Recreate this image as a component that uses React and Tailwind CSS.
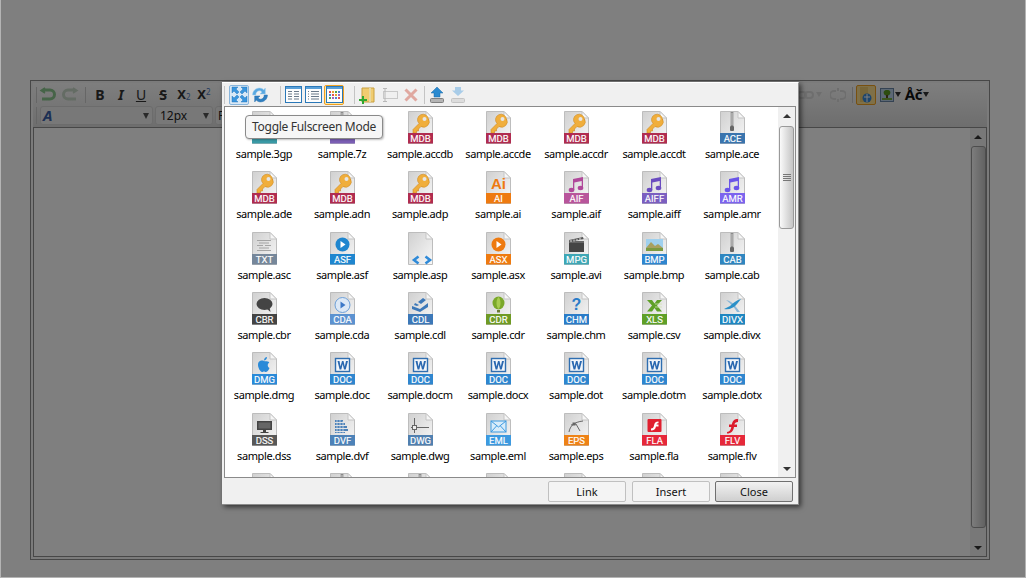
import React from "react";

const files = [
  ["3gp","","#3a9aa6","film"],["7z","","#7b5fb5","zip"],["accdb","MDB","#b02c50","key"],["accde","MDB","#b02c50","key"],["accdr","MDB","#b02c50","key"],["accdt","MDB","#b02c50","key"],["ace","ACE","#3a74ad","zip"],
  ["ade","MDB","#b02c50","key"],["adn","MDB","#b02c50","key"],["adp","MDB","#b02c50","key"],["ai","AI","#ee7a10","ai"],["aif","AIF","#b8559b","noteP"],["aiff","AIFF","#7b5fc0","noteV"],["amr","AMR","#7c64ee","noteB"],
  ["asc","TXT","#76879a","txt"],["asf","ASF","#1f86cf","playB"],["asp","","","code"],["asx","ASX","#ee7a10","playO"],["avi","MPG","#3fa7b5","clap"],["bmp","BMP","#2f86cf","land"],["cab","CAB","#2f86c0","zip"],
  ["cbr","CBR","#444444","bubble"],["cda","CDA","#5c92d0","disc"],["cdl","CDL","#3c78b8","cdl"],["cdr","CDR","#6f9a24","balloon"],["chm","CHM","#2a7cc8","help"],["csv","XLS","#5fa028","xls"],["divx","DIVX","#1f86c0","divx"],
  ["dmg","DMG","#2a8ad8","apple"],["doc","DOC","#2f86cf","word"],["docm","DOC","#2f86cf","word"],["docx","DOC","#2f86cf","word"],["dot","DOC","#2f86cf","word"],["dotm","DOC","#2f86cf","word"],["dotx","DOC","#2f86cf","word"],
  ["dss","DSS","#585858","monitor"],["dvf","DVF","#4d82b8","grid"],["dwg","DWG","#5080b0","dwg"],["eml","EML","#3d9ae0","mail"],["eps","EPS","#ee8216","eps"],["fla","FLA","#e6283a","fla"],["flv","FLV","#e6283a","flv"],
  ["","","",""],["","","","zip"],["","","","zip"],["","","",""],["","","",""],["","","",""],["","","",""],
];

function Glyph({ type }) {
  switch (type) {
    case "key":
      return <g><path d="M22.500 8.500 a5.500 5.500 0 1 0 -9.500 4 L7 18.500 l0 3.500 3.500 0 0-2 2 0 0-2 2.500 -2.500 a5.500 5.500 0 0 0 7.500-7.500z" fill="#f0ae3c" stroke="#cf8a20" strokeWidth=".6"/><circle cx="18.500" cy="8" r="2" fill="#e6e6e6"/></g>;
    case "zip":
      return <g><rect x="12.600" y="1" width="2.800" height="14" fill="#8a8a8a"/><path d="M12.600 3h2.800M12.600 5h2.800M12.600 7h2.800M12.600 9h2.800M12.600 11h2.800M12.600 13h2.800" stroke="#d8d8d8" strokeWidth=".8"/><rect x="12" y="15" width="4" height="5" rx="1" fill="#666"/></g>;
    case "film":
      return <g><rect x="7" y="6" width="14" height="12" fill="#57686c"/><path d="M9 8h2M9 11h2M9 14h2M17 8h2M17 11h2M17 14h2" stroke="#eee" strokeWidth="1.200"/></g>;
    case "ai":
      return <text x="14.500" y="18" textAnchor="middle" fontFamily="'Liberation Sans', sans-serif" fontWeight="700" fontSize="15" fill="#ee7a10">Ai</text>;
    case "noteP": case "noteV": case "noteB": {
      const c = type === "noteP" ? "#b0489a" : type === "noteV" ? "#6a4cc0" : "#6a55e8";
      return <g fill={c}><ellipse cx="9.500" cy="19" rx="2.800" ry="2.200"/><ellipse cx="18.500" cy="17" rx="2.800" ry="2.200"/><path d="M11 19V8l10-2v11h-1.300V10l-7.400 1.500V19z"/></g>;
    }
    case "txt":
      return <g stroke="#a4a4a4" strokeWidth="1"><path d="M7 8.500h14M9 11h10M7 13.500h6M15 13.500h6M9 16h10M7 18.500h14"/></g>;
    case "playB": case "playO": {
      const c = type === "playB" ? "#1f86cf" : "#ee7a10";
      return <g><circle cx="14.500" cy="12.500" r="7" fill={c}/><path d="M12.500 9v7l5-3.500z" fill="#fff"/></g>;
    }
    case "code":
      return <g fill="none" stroke="#2f8ad8" strokeWidth="2.600"><path d="M12.500 24.500L8 28l4.500 3.500"/><path d="M19.500 24.500L24 28l-4.500 3.500"/></g>;
    case "clap":
      return <g><rect x="7" y="11" width="15" height="9" fill="#444"/><path d="M7 9h15v2H7z" fill="#666"/><path d="M7 8l14-3 .6 2L7.600 10z" fill="#555"/><path d="M9 8v2M12 7.500v2M15 7v2M18 6v2" stroke="#ddd" strokeWidth="1"/></g>;
    case "land":
      return <g><rect x="6" y="7" width="17" height="12" fill="#9fd0ee"/><path d="M6 16l5-6 4 4 3-2 5 4v3H6z" fill="#a8a060"/><rect x="6" y="16" width="17" height="3" fill="#7a9a40"/></g>;
    case "bubble":
      return <g fill="#444"><ellipse cx="14.500" cy="12" rx="8" ry="6"/><path d="M16 16l4.500 4-1-5z"/></g>;
    case "disc":
      return <g><circle cx="14.500" cy="13" r="7.500" fill="#dce8f6" stroke="#6ea0d8"/><path d="M12.500 9.500v7l5-3.500z" fill="#3c78c8"/></g>;
    case "cdl":
      return <g fill="#3c78b8"><path d="M6 14l8 3 8-6v4l-8 5-8-3z"/><path d="M17 6l-5 4 3 2 5-4z"/><path d="M9 11l4 2-2 1-3-1z"/></g>;
    case "balloon":
      return <g><ellipse cx="14.500" cy="11" rx="6" ry="6.500" fill="#7aa82a"/><path d="M12.500 11c0-3 1-5 2-6 1 1 2 3 2 6s-1 5-2 6c-1-1-2-3-2-6z" fill="#a8cc50"/><rect x="13" y="18" width="3" height="2.500" fill="#6a7a30"/></g>;
    case "help":
      return <text x="14.500" y="17.500" textAnchor="middle" fontFamily="'Liberation Sans', sans-serif" fontWeight="700" fontSize="16" fill="#2a7cc8">?</text>;
    case "xls":
      return <g><path d="M7 8h5l2.500 3.500L17 8h5l-5 5.500 5 6h-5l-2.500-3.500L12 19.500H7l5-6z" fill="#5fa028"/><path d="M15 12h7M15 15h7" stroke="#d0e4b0" strokeWidth=".8"/></g>;
    case "divx":
      return <g><path d="M8 8c4 .5 7 3 10 7l4 5h-3c-3-5-6-8-11-12z" fill="#8cb8d8"/><path d="M23 7c-4 1-8 4-11 7l-6 3c5 1 10-1 13-5z" fill="#2a90c8"/></g>;
    case "apple":
      return <g fill="#2a8ad8"><path d="M14 9c-2-1-6-.5-6 4 0 3 2.500 7 4 7 1 0 1.200-.5 2-.5s1 .5 2 .5c1.500 0 3-2.500 3.500-4-2-1-2.500-4-.2-5.500C18 8.500 15.500 9.500 14 9z"/><path d="M14 8.500c0-2 1.500-3.500 3-3.500 0 2-1.500 3.500-3 3.500z"/></g>;
    case "word":
      return <g><rect x="7.500" y="6.500" width="14" height="13" fill="#f2f6fa" stroke="#2f6eb0" strokeWidth="1.400"/><path d="M9.500 9h2l1 5.500L14 9h1.500l1.300 5.500L18 9h2l-2.300 8.500H16L14.700 12l-1.400 5.500h-1.700z" fill="#2a68b0"/></g>;
    case "monitor":
      return <g><rect x="7" y="8" width="15" height="9" fill="#444"/><rect x="8.500" y="9.500" width="12" height="6" fill="#666"/><rect x="13" y="17" width="3" height="2" fill="#444"/><rect x="10.500" y="19" width="8" height="1" fill="#444"/></g>;
    case "grid":
      return <g fill="#4d82b8"><path d="M7 7h8v2H7zM7 10h10v2H7zM7 13h12v2H7zM7 16h13v2H7zM7 19h10v1H7z"/><path d="M9 6v15M12 6v15M15 8v13" stroke="#dfe6ee" strokeWidth=".7"/></g>;
    case "dwg":
      return <g fill="none" stroke="#666" strokeWidth="1"><path d="M8.500 5v15M11 14.500H23M5 14.500h1"/><rect x="6.500" y="12.500" width="4" height="4" fill="#eee"/></g>;
    case "mail":
      return <g><rect x="7" y="8" width="15" height="11" fill="#d8ecfa" stroke="#3d9ae0"/><path d="M7 8l7.500 6L22 8M7 19l5.500-6M22 19l-5.500-6" fill="none" stroke="#3d9ae0"/></g>;
    case "eps":
      return <g fill="none" stroke="#666" strokeWidth="1"><path d="M7 19c1-6 5-10 14-11"/><path d="M9 12l5-1 4 7"/><rect x="11" y="10" width="2" height="2" fill="#666"/></g>;
    case "fla":
      return <g><rect x="7.500" y="6" width="14" height="13" rx="1" fill="#e02030"/><path d="M18.500 8.500c-3 0-4 1.500-4.500 4-.4 2-1 3-3 3v2c3 0 4.500-1.500 5-4h2.500v-2h-2c.3-1 1-1.200 2-1.200z" fill="#fff"/></g>;
    case "flv":
      return <path d="M20 6c-4 0-5.500 2-6.200 5.500H11v2.500h2.300c-.6 3-1.500 4.500-4.300 5v1.500c4.500 0 6.300-2.500 7-6.500h3v-2.500h-2.600c.4-1.600 1.300-2.500 3.600-2.500z" fill="#dc1c2c"/>;
    default:
      return null;
  }
}

function FileIcon({ label, color, glyph }) {
  return (
    <svg width="28" height="34" viewBox="0 0 28 34" className="block shrink-0">
      <defs>
        <linearGradient id="p" x1="0" y1="0" x2="1" y2="1">
          <stop offset="0" stopColor="#d0d0d0" />
          <stop offset="1" stopColor="#f8f8f8" />
        </linearGradient>
      </defs>
      <path d="M2.500 .5H20l6.500 6.500V32.500H2.500z" fill="url(#p)" stroke="#bdbdbd" />
      <path d="M20 .5V7h6.500z" fill="#f6f6f6" stroke="#c4c4c4" />
      <Glyph type={glyph} />
      {color ? <rect x="2" y="22" width="25" height="10.500" fill={color} /> : null}
      {label ? (
        <text x="14.500" y="30.800" textAnchor="middle" fontFamily="Roboto, sans-serif" fontSize="9.500" stroke="#fff" strokeWidth=".15" fill="#fff">{label}</text>
      ) : null}
    </svg>
  );
}

function Tb({ active, hot, children, className = "" }) {
  return (
    <div className={"flex items-center justify-center shrink-0 rounded-[2px] " + (hot ? "border border-[#f0a020] bg-[#ffe9a8] " : active ? "border border-[#8ab6dc] bg-[#d8e8f6] " : "border border-transparent ") + className}>
      {children}
    </div>
  );
}

const Sep = () => <div className="w-px h-[18px] bg-[#c4c4c4] shrink-0" />;

function ListView({ kind }) {
  return (
    <svg width="17" height="17" viewBox="0 0 17 17">
      <rect x=".5" y=".5" width="16" height="16" fill="#fdfdfd" stroke="#2a78b8" />
      <rect x="1" y="1" width="15" height="2" fill="#5aa0d8" />
      {kind === 1 && <path d="M3 5.500h4M3 8h4M3 10.500h4M3 13h4M9 5.500h5M9 8h5M9 10.500h5M9 13h5" stroke="#6a7a8a" />}
      {kind === 2 && <path d="M3 5.500h1M3 8h1M3 10.500h1M3 13h1M6 5.500h8M6 8h8M6 10.500h8M6 13h8" stroke="#6a7a8a" />}
      {kind === 3 && (
        <g>
          <path d="M3 5h2v2H3z" fill="#e05050"/><path d="M6 5h2v2H6z" fill="#e8a030"/><path d="M9 5h2v2H9z" fill="#50a050"/><path d="M12 5h2v2h-2z" fill="#5080d0"/>
          <path d="M3 8h2v2H3z" fill="#5080d0"/><path d="M6 8h2v2H6z" fill="#e05050"/><path d="M9 8h2v2H9z" fill="#e8a030"/><path d="M12 8h2v2h-2z" fill="#a060c0"/>
          <path d="M3 11h2v2H3z" fill="#50a050"/><path d="M6 11h2v2H6z" fill="#a060c0"/><path d="M9 11h2v2H9z" fill="#5080d0"/><path d="M12 11h2v2h-2z" fill="#e05050"/>
        </g>
      )}
    </svg>
  );
}

function DialogToolbar() {
  return (
    <div className="h-[23px] flex items-center bg-[#f0f0f0] pl-[2px] shrink-0">
      <div className="w-px h-[18px] bg-[#c4c4c4] mr-[4px]" />
      <Tb active className="w-[20px] h-[20px]">
        <svg width="17" height="17" viewBox="0 0 17 17" fill="#3a96de">
          <path d="M1 1h6L5 3l3 3-2 2-3-3-2 2zM16 1v6l-2-2-3 3-2-2 3-3-2-2zM1 16v-6l2 2 3-3 2 2-3 3 2 2zM16 16h-6l2-2-3-3 2-2 3 3 2-2z" stroke="#1a6ab0" strokeWidth=".4"/>
        </svg>
      </Tb>
      <div className="w-[19px] h-[20px] flex items-center justify-center ml-[1px]">
        <svg width="18" height="18" viewBox="0 0 17 17" fill="#5aa8e0">
          <path d="M1.500 8.500c0-4 3-6.500 6.500-6.500 2 0 3 .7 4 1.700L13.500 2v5.500H8.500l1.700-1.700C9.700 4.800 9 4.500 8 4.500c-2 0-3.500 1.500-3.500 4z" stroke="#9acdf0" strokeWidth=".5"/>
          <path d="M15.500 8.500c0 4-3 6.500-6.500 6.500-2 0-3-.7-4-1.700L3.500 15V9.500h5l-1.700 1.700c.5 1 1.200 1.300 2.200 1.300 2 0 3.500-1.500 3.500-4z" fill="#2f7fc0" stroke="#2a70b0" strokeWidth=".5"/>
        </svg>
      </div>
      <div className="w-[11px]" />
      <Sep />
      <div className="w-[4px]" />
      <div className="w-[17px] flex justify-center"><ListView kind={1} /></div>
      <div className="w-[3px]" />
      <div className="w-[17px] flex justify-center"><ListView kind={2} /></div>
      <div className="w-[2px]" />
      <Tb hot className="w-[20px] h-[20px]"><ListView kind={3} /></Tb>
      <div className="w-[10px]" />
      <Sep />
      <div className="w-[4px]" />
      <svg width="17" height="18" viewBox="0 0 17 18">
        <path d="M3 2h7l5 0v14H3z" fill="#f0cc70" stroke="#c8a040" />
        <path d="M11 2v14" stroke="#e8d8a0" strokeWidth="2" />
        <path d="M0 13h3v-3h2v3h3v2H5v3H3v-3H0z" fill="#30a830" />
      </svg>
      <div className="w-[5px]" />
      <svg width="17" height="17" viewBox="0 0 17 17" fill="none" stroke="#c8c8c8">
        <rect x="2.500" y="5.500" width="14" height="7" />
        <path d="M2 2.500h4M2 15.500h4M4 2.500v13" stroke="#b8b8b8" />
      </svg>
      <div className="w-[5px]" />
      <svg width="16" height="16" viewBox="0 0 16 16" stroke="#e0a8a0" strokeWidth="3">
        <path d="M2.500 2.500l11 11M13.500 2.500l-11 11" />
      </svg>
      <div className="w-[5px]" />
      <Sep />
      <div className="w-[4px]" />
      <svg width="16" height="18" viewBox="0 0 16 18">
        <path d="M8 1l6 6h-3v4H5V7H2z" fill="#2a8ad0" stroke="#1a6aa8" strokeWidth=".5" />
        <rect x="1.500" y="12.500" width="13" height="4" rx="1" fill="#b4b4b4" stroke="#808080" />
      </svg>
      <div className="w-[5px]" />
      <svg width="16" height="18" viewBox="0 0 16 18">
        <path d="M8 10L2 4.500h3V1h6v3.500h3z" fill="#a8cce8" />
        <rect x="1.500" y="12.500" width="13" height="4" rx="1" fill="#dcdcdc" stroke="#c4c4c4" />
      </svg>
    </div>
  );
}

function Arrow({ up }) {
  return <div className={"w-0 h-0 border-x-[4px] border-x-transparent " + (up ? "border-b-[4px] border-b-[#333]" : "border-t-[4px] border-t-[#333]")} />;
}

function Grip() {
  return (
    <div className="flex flex-col gap-[1px] w-[8px]">
      <div className="h-px bg-[#777]" /><div className="h-px bg-[#777]" /><div className="h-px bg-[#777]" /><div className="h-px bg-[#777]" />
    </div>
  );
}

function FileList() {
  return (
    <div className="flex min-h-0 border border-[#8a8a8a] bg-white mx-[2px] h-[372px] shrink-0">
      <div className="flex-1 overflow-hidden grid grid-cols-[repeat(7,78px)] auto-rows-[60.33px]">
        {files.map(([ext, label, color, glyph], i) => (
          <div key={i} className="flex flex-col items-center pt-[4px]">
            <FileIcon label={label} color={color} glyph={glyph} />
            {ext ? <div className="mt-[2px] leading-[14px] text-[11px] tracking-[-0.4px] text-[#000] whitespace-nowrap">sample.{ext}</div> : null}
          </div>
        ))}
      </div>
      <div className="w-[17px] bg-[#f0f0f0] flex flex-col items-center pt-[7px] pb-[6px] shrink-0">
        <Arrow up />
        <div className="w-[15px] h-[103px] mt-[8px] rounded-[3px] border border-[#9a9a9a] bg-gradient-to-r from-[#fafafa] to-[#c4c4c4] flex items-center justify-center">
          <Grip />
        </div>
        <div className="flex-1" />
        <Arrow />
      </div>
    </div>
  );
}

function DlgButton({ children, primary }) {
  return (
    <button className={"w-[78px] h-[21px] rounded-[2px] border text-[11px] leading-none text-[#111] flex items-center justify-center " + (primary ? "border-[#707070] bg-gradient-to-b from-[#f2f2f2] to-[#cfcfcf]" : "border-[#c0c0c0] bg-[#f4f4f4]")}>
      {children}
    </button>
  );
}

function Dialog() {
  return (
    <div className="absolute left-[222px] top-[82px] w-[577px] h-[423px] bg-[#f0f0f0] border-t border-t-white border-r border-b border-[#8c8c8c] flex flex-col shadow-[2px_2px_5px_rgba(0,0,0,0.6)] font-['Lato','Noto_Sans',sans-serif]">
      <DialogToolbar />
      <FileList />
      <div className="flex justify-end gap-[5px] pr-[5px] pt-[3px]">
        <div className="mr-px"><DlgButton>Link</DlgButton></div>
        <DlgButton>Insert</DlgButton>
        <DlgButton primary>Close</DlgButton>
      </div>
      <div className="absolute left-[23px] top-[32px] w-[138px] h-[24px] rounded-[4px] border border-[#8a8a8a] bg-[#f6f6f6] text-[12px] leading-[22px] text-[#333] text-center whitespace-nowrap shadow-[1px_1px_2px_rgba(0,0,0,0.25)] font-['Noto_Sans',sans-serif] tracking-[-0.3px]">
        Toggle Fulscreen Mode
      </div>
    </div>
  );
}

function Select({ w, children }) {
  return (
    <div className={"h-[19px] rounded-[3px] border border-[#d8d8d8] bg-[#f0f0f0] flex items-center justify-between pl-[2px] pr-[3px] text-[12px] text-[#222] shrink-0 " + w}>
      <div className="flex items-center">{children}</div>
      <div className="w-0 h-0 border-x-[3.500px] border-x-transparent border-t-[6px] border-t-[#555]" />
    </div>
  );
}

function EditorButton({ children, className = "" }) {
  return <div className={"w-[20px] flex justify-center items-center shrink-0 leading-none text-[#333] " + className}>{children}</div>;
}

const serifB = "[font-family:'DejaVu_Serif',serif] font-bold text-[14px]";

function Editor() {
  return (
    <div className="w-[960px] h-[480px] border border-[#8e8e8e] p-[2px] flex flex-col bg-[#f6f6f6]">
      <div className="h-[44px] bg-gradient-to-b from-[#fdfdfd] to-[#dcdcdc] flex flex-col shrink-0">
        <div className="h-[23px] flex items-center pl-[3px]">
          <div className="w-px h-[16px] bg-[#ccc] mr-[2px]" />
          <svg width="17" height="16" viewBox="0 0 17 16" fill="none" stroke="#8cc890" strokeWidth="3"><path d="M6 3h5a3.500 3.500 0 0 1 0 9H3" /><path d="M6 1L2 3.500 6 6" strokeWidth="1.500" fill="#8cc890" /></svg>
          <div className="w-[6px]" />
          <svg width="17" height="16" viewBox="0 0 17 16" fill="none" stroke="#c8d8c8" strokeWidth="3"><path d="M11 3H6a3.500 3.500 0 0 0 0 9h8" /><path d="M11 1l4 2.500L11 6" strokeWidth="1.500" fill="#c8d8c8" /></svg>
          <div className="w-[6px]" />
          <div className="w-px h-[16px] bg-[#ccc] mr-[4px]" />
          <EditorButton><span className={serifB}>B</span></EditorButton>
          <div className="w-px" />
          <EditorButton><span className={serifB + " italic"}>I</span></EditorButton>
          <EditorButton><span className="underline font-['Liberation_Sans',sans-serif] text-[14px]">U</span></EditorButton>
          <div className="w-[2px]" />
          <EditorButton><span className={serifB + " line-through"}>S</span></EditorButton>
          <div className="w-px" />
          <EditorButton><span className="[font-family:'DejaVu_Serif',serif] font-bold text-[13px]">X</span><span className="text-[8px] text-[#4a78c0] self-end font-['Liberation_Sans',sans-serif]">2</span></EditorButton>
          <EditorButton><span className="[font-family:'DejaVu_Serif',serif] font-bold text-[13px]">X</span><span className="text-[8px] text-[#4a78c0] self-start font-['Liberation_Sans',sans-serif]">2</span></EditorButton>
          <div className="flex-1" />
          <svg width="18" height="12" viewBox="0 0 18 12" fill="none" stroke="#dcdcdc" strokeWidth="2"><rect x="1" y="3" width="8" height="6" rx="3" /><rect x="8" y="3" width="8" height="6" rx="3" /></svg>
          <div className="w-0 h-0 ml-[1px] mr-[8px] border-x-[3px] border-x-transparent border-t-[5px] border-t-[#ddd]" />
          <svg width="16" height="14" viewBox="0 0 16 14" fill="none" stroke="#dcdcdc" strokeWidth="2"><path d="M6 3H4a4 4 0 0 0 0 8h2M10 3h2a4 4 0 0 1 0 8h-2M8 0v3M8 11v3" /></svg>
          <div className="w-[6px]" />
          <div className="w-px h-[16px] bg-[#ccc] mr-[3px]" />
          <div className="w-[20px] h-[20px] rounded-[2px] border border-[#f0a020] bg-[#ffe090] flex items-center justify-center">
            <svg width="15" height="17" viewBox="0 0 15 17"><path d="M2 1h8v15H2z" fill="#f0cc70" /><circle cx="9" cy="12" r="4.500" fill="#3a8ad8" /><path d="M6 11h6M9 8v8" stroke="#fff" /></svg>
          </div>
          <div className="w-[4px]" />
          <svg width="14" height="14" viewBox="0 0 14 14"><rect x=".5" y=".5" width="13" height="13" fill="#b8d0e8" stroke="#6a86a6" /><path d="M7 2c3 0 4 2 3 4s-5 2-6 0 0-4 3-4z" fill="#5a9a20" /><rect x="6" y="7" width="2" height="3" fill="#5a4a20" /><rect x="2" y="10" width="10" height="2" fill="#7ab040" /></svg>
          <div className="w-0 h-0 ml-[1px] border-x-[3px] border-x-transparent border-t-[5px] border-t-[#333]" />
          <div className="ml-[4px] font-['Liberation_Sans',sans-serif] font-bold text-[15px] leading-none text-[#111] tracking-tight">Åč</div>
          <div className="w-0 h-0 ml-[1px] mr-[58px] border-x-[3px] border-x-transparent border-t-[5px] border-t-[#333]" />
        </div>
        <div className="flex items-center gap-[2px] pl-[3px]">
          <div className="w-px h-[17px] bg-[#ccc] mr-[1px]" />
          <Select w="w-[113px]"><span className="[font-family:'DejaVu_Serif',serif] italic font-bold text-[15px] leading-none text-[#3a60a8]">A</span></Select>
          <Select w="w-[58px]"><span className="ml-[2px]">12px</span></Select>
          <Select w="w-[60px]"><span>F</span></Select>
        </div>
      </div>
      <div className="flex-1 flex min-h-0 border border-[#8e8e8e] bg-white">
        <div className="flex-1" />
        <div className="w-[16px] bg-[#f0f0f0] flex flex-col items-center pt-[7px] pb-[6px]">
          <Arrow up />
          <div className="w-[15px] flex-1 mt-[7px] mb-[18px] rounded-[3px] border border-[#9a9a9a] bg-gradient-to-r from-[#fafafa] to-[#c4c4c4]" />
          <Arrow />
        </div>
      </div>
    </div>
  );
}

export default function App() {
  return (
    <div className="relative w-[1026px] h-[578px] overflow-hidden bg-white pl-[30px] pt-[80px] font-['Noto_Sans','DejaVu_Sans',sans-serif]">
      <Editor />
      <div className="absolute inset-0 bg-black/50 border-x border-b border-[#b4b4b4]" />
      <Dialog />
    </div>
  );
}
